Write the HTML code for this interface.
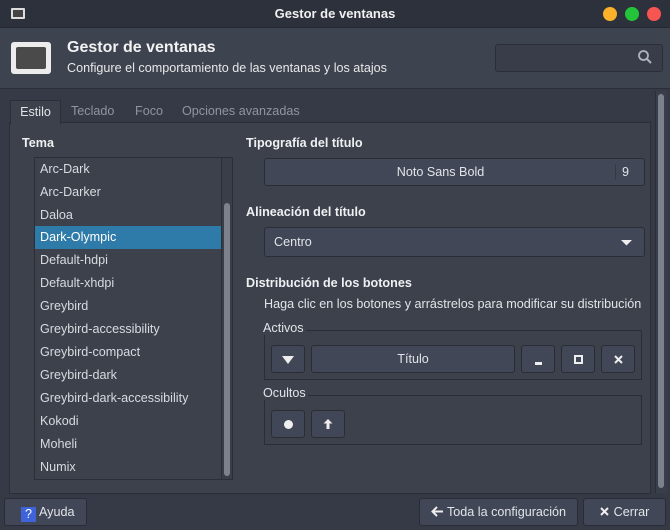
<!DOCTYPE html>
<html><head><meta charset="utf-8"><style>
*{margin:0;padding:0;box-sizing:border-box}
html,body{width:670px;height:530px;overflow:hidden}
body{background:#363a46;font-family:"Liberation Sans","DejaVu Sans",sans-serif;font-size:12.6px;color:#e2e4e8;position:relative;white-space:nowrap}
.a{position:absolute}
.tb{left:0;top:0;width:670px;height:28px;background:#2d313b;border-bottom:1px solid #262931}
.hdr{left:0;top:28px;width:670px;height:61px;background:#3e4350;border-bottom:1px solid #2b2e37}
.btn{position:absolute;background:#414756;border:1px solid #2a2d35;border-radius:3px;color:#e2e4e8;text-align:center}
.panel{left:9px;top:122px;width:642px;height:372px;background:#3c414c;border:1px solid #2b2e37}
.list{left:34px;top:157px;width:199px;height:323px;background:#3c414c;border:1px solid #2b2e37;overflow:hidden}
.it{position:absolute;left:5px;height:23px;line-height:23px;color:#d8dbe0}
.lbl{font-weight:bold;color:#eef0f2}
.frame{position:absolute;border:1px solid #2a2d35}
</style></head><body>
<div class="a tb">
  <div class="a" style="left:11px;top:8px;width:14px;height:11px;border:2px solid #ddd;background:#444;border-radius:1px"></div>
  <div class="a" style="left:0;width:670px;top:6px;text-align:center;font-weight:bold;font-size:13px;color:#f0f0f0">Gestor de ventanas</div>
  <div class="a" style="left:603px;top:7px;width:14px;height:14px;border-radius:50%;background:#fbb12a"></div>
  <div class="a" style="left:625px;top:7px;width:14px;height:14px;border-radius:50%;background:#23c43a"></div>
  <div class="a" style="left:647px;top:7px;width:14px;height:14px;border-radius:50%;background:#f65552"></div>
</div>
<div class="a hdr">
  <div class="a" style="left:11px;top:14px;width:40px;height:32px;background:#ececec;border-radius:3px"></div>
  <div class="a" style="left:16px;top:19px;width:30px;height:22px;background:#4a4a4a;border-radius:2px"></div>
  <div class="a" style="left:67px;top:11px;font-weight:bold;font-size:16px;color:#f2f2f2">Gestor de ventanas</div>
  <div class="a" style="left:67px;top:33px;font-size:12.6px;color:#e8e8e8">Configure el comportamiento de las ventanas y los atajos</div>
  <div class="a" style="left:495px;top:16px;width:168px;height:28px;border:1px solid #2b2e37;border-radius:3px;background:#393d49"></div>
  <svg class="a" style="left:637px;top:21px" width="16" height="16" viewBox="0 0 16 16"><circle cx="6.5" cy="6.5" r="4.5" fill="none" stroke="#aeb2ba" stroke-width="1.8"/><path d="M10 10l4 4" stroke="#aeb2ba" stroke-width="2"/></svg>
</div>
<div class="a" style="left:10px;top:100px;width:51px;height:24px;background:#3c414c;border:1px solid #2b2e37;border-bottom:none;z-index:2;line-height:22px;text-align:center">Estilo</div>
<div class="a" style="left:71px;top:104px;color:#8f949e">Teclado</div>
<div class="a" style="left:135px;top:104px;color:#8f949e">Foco</div>
<div class="a" style="left:182px;top:104px;color:#8f949e">Opciones avanzadas</div>
<div class="a panel"></div>
<div class="a" style="left:655px;top:91px;width:12px;height:402px;background:#3a3e4a;border-left:1px solid #2b2e37"></div>
<div class="a" style="left:658px;top:94px;width:6px;height:394px;background:#7d818c;border-radius:3px"></div>
<div class="a lbl" style="left:22px;top:136px">Tema</div>
<div class="a list">
  <div class="a" style="left:186px;top:0;width:12px;height:321px;border-left:1px solid #2b2e37;background:#3a3e49;z-index:2"></div>
  <div class="a" style="left:189px;top:45px;width:6px;height:273px;background:#7d818c;border-radius:3px;z-index:3"></div>
  <div class="it" style="top:0">Arc-Dark</div>
  <div class="it" style="top:23px">Arc-Darker</div>
  <div class="it" style="top:46px">Daloa</div>
  <div class="it" style="top:68px;left:0;width:186px;padding-left:5px;background:#2e7aa8;color:#fff">Dark-Olympic</div>
  <div class="it" style="top:91px">Default-hdpi</div>
  <div class="it" style="top:114px">Default-xhdpi</div>
  <div class="it" style="top:137px">Greybird</div>
  <div class="it" style="top:160px">Greybird-accessibility</div>
  <div class="it" style="top:183px">Greybird-compact</div>
  <div class="it" style="top:206px">Greybird-dark</div>
  <div class="it" style="top:229px">Greybird-dark-accessibility</div>
  <div class="it" style="top:252px">Kokodi</div>
  <div class="it" style="top:275px">Moheli</div>
  <div class="it" style="top:298px">Numix</div>
</div>
<div class="a lbl" style="left:246px;top:136px">Tipografía del título</div>
<div class="btn" style="left:264px;top:158px;width:381px;height:28px;line-height:26px"><span style="position:relative;left:-14px">Noto Sans Bold</span>
  <div class="a" style="left:350px;top:5px;width:1px;height:16px;background:#353945"></div>
  <div class="a" style="left:357px;top:0">9</div></div>
<div class="a lbl" style="left:246px;top:205px">Alineación del título</div>
<div class="btn" style="left:264px;top:227px;width:381px;height:30px;line-height:28px;text-align:left;padding-left:9px">Centro
  <svg class="a" style="left:356px;top:11px" width="12" height="8"><path d="M0 1h11l-5.5 5.5z" fill="#eee"/></svg></div>
<div class="a lbl" style="left:246px;top:276px">Distribución de los botones</div>
<div class="a" style="left:264px;top:297px">Haga clic en los botones y arrástrelos para modificar su distribución</div>
<div class="frame" style="left:264px;top:330px;width:378px;height:50px"></div>
<div class="a" style="left:263px;top:321px;background:#3c414c;padding-right:2px">Activos</div>
<div class="btn" style="left:271px;top:345px;width:34px;height:28px"><svg style="margin-top:9px" width="12" height="10"><path d="M0 1h12l-6 8z" fill="#eee"/></svg></div>
<div class="btn" style="left:311px;top:345px;width:204px;height:28px;line-height:26px">Título</div>
<div class="btn" style="left:521px;top:345px;width:34px;height:28px"><div class="a" style="left:13px;top:16px;width:7px;height:3px;background:#eee"></div></div>
<div class="btn" style="left:561px;top:345px;width:34px;height:28px"><div class="a" style="left:12px;top:9px;width:9px;height:9px;border:2px solid #eee"></div></div>
<div class="btn" style="left:601px;top:345px;width:34px;height:28px"><svg style="margin-top:9px" width="9" height="9"><path d="M1 1l7 7M8 1l-7 7" stroke="#eee" stroke-width="2"/></svg></div>
<div class="frame" style="left:264px;top:395px;width:378px;height:50px"></div>
<div class="a" style="left:263px;top:386px;background:#3c414c;padding-right:2px">Ocultos</div>
<div class="btn" style="left:271px;top:410px;width:34px;height:28px"><div class="a" style="left:12px;top:9px;width:9px;height:9px;border-radius:50%;background:#eee"></div></div>
<div class="btn" style="left:311px;top:410px;width:34px;height:28px"><svg style="margin-top:8px" width="10" height="10"><path d="M5 0l4.5 4.5H6.5V10h-3V4.5H0.5z" fill="#eee"/></svg></div>
<div class="btn" style="left:4px;top:498px;width:83px;height:28px;line-height:26px;text-align:left;padding-left:16px"><span style="display:inline-block;width:15px;height:15px;background:#3f63d8;color:#fff;text-align:center;line-height:15px;vertical-align:-2px;margin-right:3px">?</span>Ayuda</div>
<div class="btn" style="left:419px;top:498px;width:159px;height:28px;line-height:26px"><svg width="12" height="11" style="vertical-align:-1px;margin-right:4px"><path d="M6 1L1.5 5.5 6 10M1.5 5.5H12" fill="none" stroke="#eee" stroke-width="2"/></svg>Toda la configuración</div>
<div class="btn" style="left:583px;top:498px;width:83px;height:28px;line-height:26px"><svg width="9" height="9" style="margin-right:5px"><path d="M1 1l7 7M8 1l-7 7" stroke="#eee" stroke-width="2"/></svg>Cerrar</div>
</body></html>
